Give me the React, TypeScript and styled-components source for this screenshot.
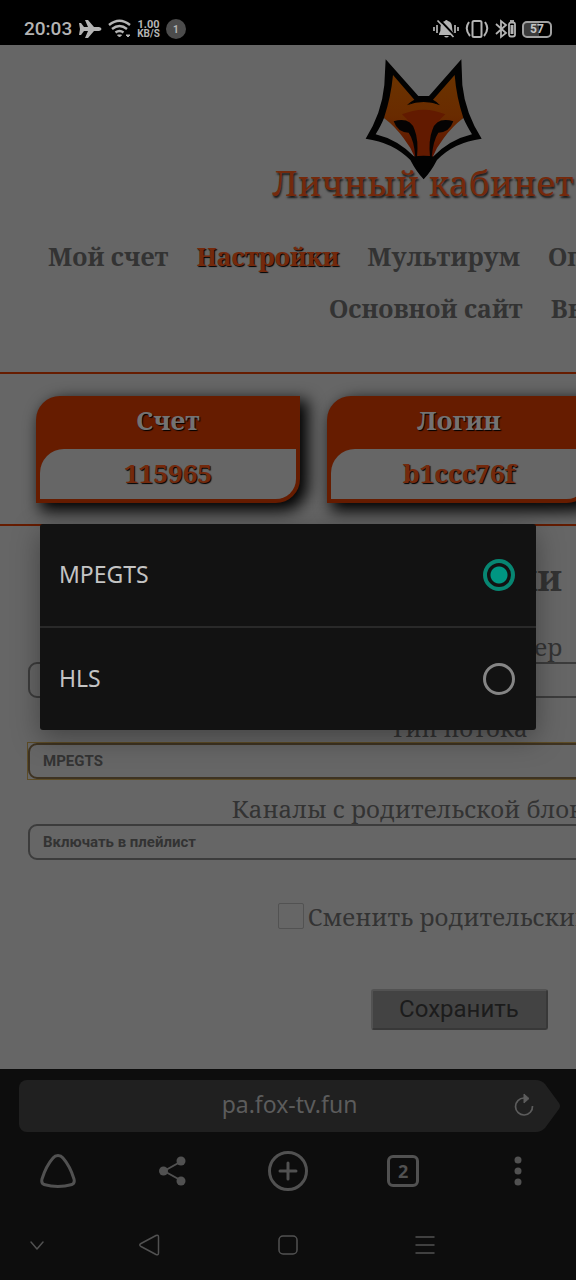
import React, { useState } from "react";
import styled, { createGlobalStyle } from "styled-components";

const serif = `"Noto Serif", "DejaVu Serif Condensed", "DejaVu Serif", serif`;
const orange = "#661c00";

const GlobalStyle = createGlobalStyle`
  * { box-sizing: border-box; }
  body { margin: 0; background: #0d0d0d; font-family: Roboto, sans-serif; }
  button { font: inherit; }
`;

const Screen = styled.div`
  position: relative;
  display: flex;
  flex-direction: column;
  min-height: 100vh;
  overflow: hidden;
`;

const StatusBar = styled.header`
  display: flex;
  align-items: center;
  justify-content: space-between;
  height: 45px;
  padding: 13px 24px 0;
  background: #000;
  color: #b4b4b4;
`;

const StatusGroup = styled.div<{ $gap: number }>`
  display: flex;
  align-items: center;
  gap: ${(p) => p.$gap}px;
`;

const Clock = styled.span`
  font-size: 19px;
  font-weight: 500;
  line-height: 24px;
`;

const Speed = styled.span`
  display: flex;
  flex-direction: column;
  align-items: center;
  font-size: 10px;
  font-weight: 700;
  line-height: 9px;
`;

const SpeedValue = styled.span`
  font-size: 11px;
`;

const Count = styled.span`
  display: grid;
  place-items: center;
  width: 20px;
  height: 20px;
  border-radius: 50%;
  background: #4c4c4c;
  font-size: 10px;
  font-weight: 700;
`;

const Battery = styled.span`
  display: grid;
  place-items: center;
  width: 30px;
  height: 17px;
  border: 2px solid #a0a0a0;
  border-radius: 5px;
  background: linear-gradient(90deg, #3c3c3c 57%, #000 57%);
  color: #c4c4c4;
  font-size: 12px;
  font-weight: 700;
  line-height: 13px;
`;

const Viewport = styled.main`
  flex: 1;
  overflow: hidden;
  background: #666;
  font-family: ${serif};
  color: #333;
`;

const Page = styled.div`
  min-width: 918px;
`;

const Brand = styled.div`
  display: flex;
  flex-direction: column;
  align-items: center;
  width: 846px;
  height: 178px;
  padding-top: 14px;
`;

const Title = styled.h1`
  margin: -22px 0 0;
  color: #74290c;
  font-size: 35px;
  font-weight: 400;
  line-height: 48px;
  text-shadow: 1px 2px 2px #1a1a1a;
  white-space: nowrap;
`;

const Menu = styled.nav`
  height: 151px;
  border-bottom: 2px solid ${orange};
  padding-top: 7px;
`;

const MenuRow = styled.div<{ $indent: number }>`
  display: flex;
  gap: 28px;
  padding-left: ${(p) => p.$indent}px;
  line-height: 52px;
`;

const MenuLink = styled.a<{ $active?: boolean }>`
  color: ${(p) => (p.$active ? "#74290c" : "#333")};
  font-size: 25px;
  font-weight: 700;
  text-decoration: none;
  text-shadow: ${(p) => (p.$active ? "1px 1px 1px #000" : "none")};
  white-space: nowrap;
`;

const Cards = styled.section`
  display: flex;
  gap: 27px;
  height: 152px;
  padding: 22px 36px 0;
  border-bottom: 2px solid ${orange};
`;

const Card = styled.div`
  display: flex;
  flex-direction: column;
  width: 264px;
  height: 107px;
  padding: 0 4px 4px;
  border-radius: 24px 0 24px 0;
  background: ${orange};
  box-shadow: 6px 6px 16px 2px #000;
  text-align: center;
  font-size: 26px;
  font-weight: 700;
`;

const CardName = styled.div`
  height: 53px;
  line-height: 48px;
  color: #737373;
  text-shadow: 1px 1px 1px #000;
`;

const CardValue = styled.div`
  flex: 1;
  border-radius: 24px 0 20px 0;
  background: #666;
  color: #74290c;
  line-height: 48px;
  text-shadow: 1px 1px 1px #000;
`;

const Form = styled.form`
  display: flex;
  flex-direction: column;
  align-items: stretch;
  padding: 28px 28px 0;
`;

const Heading = styled.h2`
  margin: 0 0 15px;
  font-size: 36px;
  line-height: 48px;
  text-align: center;
`;

const Label = styled.label`
  height: 45px;
  padding-top: 12px;
  font-size: 24px;
  line-height: 36px;
  text-align: center;
  white-space: nowrap;
`;

const Field = styled.div<{ $focused?: boolean }>`
  display: flex;
  height: 36px;
  outline: ${(p) => (p.$focused ? "1px solid #5d4c26" : "none")};
`;

const Select = styled.select<{ $focused?: boolean }>`
  appearance: none;
  flex: 1;
  padding: 0 13px;
  border: 2px solid ${(p) => (p.$focused ? "#3e3322" : "#3c3c3c")};
  border-radius: 9px;
  outline: none;
  background: #666;
  color: #333;
  font: 700 15px/20px Roboto, sans-serif;
`;

const CheckRow = styled.label`
  display: flex;
  align-items: center;
  justify-content: center;
  gap: 4px;
  height: 36px;
  margin-top: 38px;
  font-size: 24px;
  white-space: nowrap;
`;

const Checkbox = styled.input`
  appearance: none;
  width: 26px;
  height: 26px;
  margin: 0;
  border: 1px solid #525252;
  border-radius: 2px;
`;

const Save = styled.button`
  align-self: center;
  width: 177px;
  height: 41px;
  margin: 55px 0 39px;
  padding: 0 0 2px;
  border: 2px solid;
  border-color: #525252 #383838 #383838 #525252;
  border-radius: 3px;
  background: #434343;
  color: #1c1c1c;
  font-family: Roboto, sans-serif;
  font-size: 24px;
  line-height: 32px;
`;

const Browser = styled.footer`
  padding-top: 11px;
  background: #0d0d0d;
  color: #515151;
`;

const AddressBar = styled.div`
  display: flex;
  height: 52px;
  margin: 0 16px 0 19px;
`;

const Address = styled.div`
  position: relative;
  flex: 1;
  display: flex;
  align-items: center;
  justify-content: center;
  padding: 0 0 4px 24px;
  border-radius: 8px 0 0 8px;
  background: #202020;
  color: #5c5c5c;
  font-family: "Noto Sans", sans-serif;
  font-size: 23px;
`;

const PlainButton = styled.button`
  display: grid;
  place-items: center;
  padding: 0;
  border: 0;
  background: none;
  color: inherit;
`;

const Reload = styled(PlainButton)`
  position: absolute;
  right: 0;
  top: 13px;
  width: 24px;
  height: 24px;
`;

const Toolbar = styled.div`
  display: grid;
  grid-template-columns: repeat(5, 1fr);
  height: 78px;
`;

const SystemNav = styled.div`
  display: grid;
  grid-template-columns: 74fr 150fr 128fr 146fr 78fr;
  height: 70px;
`;

const Tabs = styled.span`
  display: grid;
  place-items: center;
  width: 32px;
  height: 32px;
  border: 3px solid #515151;
  border-radius: 6px;
  font-family: "Noto Sans", sans-serif;
  font-size: 18px;
  font-weight: 700;
  line-height: 24px;
`;

const Dialog = styled.div`
  position: absolute;
  top: 524px;
  left: 40px;
  right: 40px;
  border-radius: 3px;
  background: #121212;
  box-shadow: 0 8px 28px rgba(0, 0, 0, 0.35);
`;

const Option = styled.label`
  display: flex;
  align-items: center;
  justify-content: space-between;
  height: 102px;
  padding: 0 21px 0 19px;
  color: #c4c4c4;
  font-family: "Noto Sans", sans-serif;
  font-size: 23px;
  line-height: 32px;

  & + & {
    height: 104px;
    border-top: 2px solid #292929;
  }
`;

const OptionName = styled.span`
  padding-bottom: 2px;
`;

const Radio = styled.input`
  appearance: none;
  width: 32px;
  height: 32px;
  margin: 0;
  border: 3px solid #858585;
  border-radius: 50%;

  &:checked {
    border: 4px solid #078672;
    background: radial-gradient(circle, #009682 8px, transparent 9px);
  }
`;

const Fox = () => (
  <svg width="117" height="122" viewBox="314 42 351 366" aria-hidden="true">
    <defs>
      <linearGradient id="fur" x1="0" y1="0" x2="0" y2="1">
        <stop offset="0" stopColor="#6b3300" />
        <stop offset="0.500" stopColor="#692b00" />
        <stop offset="1" stopColor="#5c1000" />
      </linearGradient>
    </defs>
    <path d="M376 43 L474 153 L506 153 L603 43 L606 120 Q615 205 664 281 Q580 292 530 345 Q512 380 490 403 Q468 380 450 345 Q398 292 316 281 Q364 205 372 120Z" fill="#020202" />
    <path d="M398 90 L462 164 Q447 172 440 180 Q488 158 538 180 Q530 170 518 164 L583 90 Q588 155 609 219 L560 280 L518 336 H464 L420 280 L371 219 Q392 155 398 90Z" fill="url(#fur)" />
    <path d="M425 208 Q490 180 555 208 Q520 235 515 290 L512 336 H467 L462 290 Q460 235 425 208Z" fill="#621a00" />
    <path d="M371 219 Q405 245 430 280 Q452 308 463 336 Q412 284 346 268 Q363 240 371 219Z M609 219 Q575 245 550 280 Q528 308 517 336 Q568 284 635 268 Q618 240 609 219Z" fill="#676767" />
    <path d="M400 229 Q450 215 463 255 Q475 285 470 336 H465 Q461 285 445 263 Q412 263 400 229Z M579 229 Q529 215 516 255 Q504 285 509 336 H514 Q519 285 534 263 Q567 263 579 229Z" fill="#050303" />
    <path d="M440 181 Q490 151 540 181 Q490 161 440 181Z M456 336 Q490 328 526 336 L490 401Z" fill="#020202" />
  </svg>
);

const Line = ({ size, width = 2, children }: { size: number; width?: number; children: React.ReactNode }) => (
  <svg
    width={size}
    height={size}
    viewBox={`0 0 ${size} ${size}`}
    fill="none"
    stroke="currentColor"
    strokeWidth={width}
    strokeLinecap="round"
    strokeLinejoin="round"
    aria-hidden="true"
  >
    {children}
  </svg>
);

export default function App() {
  const [stream, setStream] = useState("MPEGTS");

  return (
    <Screen>
      <GlobalStyle />
      <StatusBar>
        <StatusGroup $gap={6}>
          <Clock>20:03</Clock>
          <svg width="24" height="20" viewBox="0 0 24 20" fill="currentColor" aria-hidden="true">
            <path d="M1 4 H3 L6 8 H10 L7 1 H10 L16 8 H21 Q23.500 8.500 23.500 10 Q23.500 11.500 21 12 H16 L10 19 H7 L10 12 H6 L3 16 H1 L2 10Z" />
          </svg>
          <svg width="23" height="20" viewBox="0 0 23 20" fill="none" stroke="currentColor" strokeWidth="2.400" aria-hidden="true">
            <path d="M1 6 Q11.500 -2.500 22 6 M4 10 Q11.500 4 19 10 M7.500 13.500 Q11.500 10.500 15.500 13.500" />
            <path d="M9.500 16 h4 l-2 2z M18 16 h4 l-2 2z" fill="currentColor" strokeWidth="1" />
          </svg>
          <Speed>
            <SpeedValue>1.00</SpeedValue>
            <span>KB/S</span>
          </Speed>
          <Count>1</Count>
        </StatusGroup>
        <StatusGroup $gap={6}>
          <svg width="26" height="20" viewBox="0 0 26 20" aria-hidden="true">
            <path d="M6 15 Q8 12 7.500 8 Q8 3 12 2 Q13 0 15 2 Q19 3 19 8 Q19 12 21 15 V16 H6Z M11 17 h5 q-2.500 3 -5 0Z" fill="currentColor" />
            <path d="M6 0 L22 17" stroke="#000" strokeWidth="2" />
            <path d="M4.500 1.500 L20.500 18 M1 8 v4 M4 6 v8 M22 6 v8 M25 8 v4" stroke="currentColor" strokeWidth="1.700" />
          </svg>
          <svg width="24" height="20" viewBox="0 0 24 20" fill="none" stroke="currentColor" strokeWidth="2" aria-hidden="true">
            <rect x="7.500" y="2" width="9" height="16" rx="1.500" />
            <path d="M4 3 Q-1 10 5 17 M20 3 Q25 10 19 17" />
          </svg>
          <svg width="21" height="20" viewBox="0 0 21 20" fill="none" stroke="currentColor" strokeWidth="1.800" aria-hidden="true">
            <path d="M1 5 L11 14 L6 18 V2 L11 6 L1 15" />
            <rect x="14" y="3.500" width="6" height="14" rx="2" />
            <path d="M15 2 h4" />
            <path d="M17 6 v9" strokeWidth="3" />
          </svg>
          <Battery>57</Battery>
        </StatusGroup>
      </StatusBar>

      <Viewport>
        <Page>
          <Brand>
            <Fox />
            <Title>Личный кабинет</Title>
          </Brand>
          <Menu>
            <MenuRow $indent={48}>
              <MenuLink href="#account">Мой счет</MenuLink>
              <MenuLink href="#settings" $active>Настройки</MenuLink>
              <MenuLink href="#multiroom">Мультирум</MenuLink>
              <MenuLink href="#payment">Оплата</MenuLink>
            </MenuRow>
            <MenuRow $indent={329}>
              <MenuLink href="#site">Основной сайт</MenuLink>
              <MenuLink href="#exit">Выход</MenuLink>
            </MenuRow>
          </Menu>
          <Cards>
            <Card>
              <CardName>Счет</CardName>
              <CardValue>115965</CardValue>
            </Card>
            <Card>
              <CardName>Логин</CardName>
              <CardValue>b1ccc76f</CardValue>
            </Card>
          </Cards>
          <Form>
            <Heading>Настройки</Heading>
            <Label htmlFor="server">Выберите сервер</Label>
            <Field>
              <Select id="server" />
            </Field>
            <Label htmlFor="stream">Тип потока</Label>
            <Field $focused>
              <Select id="stream" $focused value={stream} onChange={(e) => setStream(e.target.value)}>
                <option>MPEGTS</option>
                <option>HLS</option>
              </Select>
            </Field>
            <Label htmlFor="channels">Каналы с родительской блокировкой</Label>
            <Field>
              <Select id="channels">
                <option>Включать в плейлист</option>
              </Select>
            </Field>
            <CheckRow>
              <Checkbox type="checkbox" />
              Сменить родительский код
            </CheckRow>
            <Save type="button">Сохранить</Save>
          </Form>
        </Page>
      </Viewport>

      <Browser>
        <AddressBar>
          <Address>
            pa.fox-tv.fun
            <Reload aria-label="Обновить">
              <svg width="24" height="24" viewBox="0 0 24 24" fill="none" stroke="currentColor" strokeWidth="1.700" aria-hidden="true">
                <path d="M12 5 A8.500 8.500 0 1 0 20.500 13" />
                <path d="M12 1 L17 5.500 L12 10Z" fill="currentColor" strokeWidth="1" />
              </svg>
            </Reload>
          </Address>
          <svg width="24" height="52" viewBox="0 0 24 52" aria-hidden="true">
            <path d="M0 0 Q5 0 9 4 L23 23 Q25 26 23 29 L9 48 Q5 52 0 52Z" fill="#202020" />
          </svg>
        </AddressBar>
        <Toolbar>
          <PlainButton aria-label="Алиса">
            <Line size={38} width={3}>
              <path d="M19 3.500 Q22 3.500 24 6 Q31 14 35 27 Q36 31 33 32.500 Q19 36.500 5 32.500 Q2 31 3 27 Q7 14 14 6 Q16 3.500 19 3.500Z" />
            </Line>
          </PlainButton>
          <PlainButton aria-label="Поделиться">
            <Line size={30}>
              <path d="M24 5 L6 15 L24 25" />
              <g fill="currentColor" stroke="none">
                <circle cx="23" cy="5" r="4.500" />
                <circle cx="5.500" cy="15" r="4.500" />
                <circle cx="23" cy="25" r="4.500" />
              </g>
            </Line>
          </PlainButton>
          <PlainButton aria-label="Новая вкладка">
            <Line size={42} width={3}>
              <circle cx="21" cy="21" r="18.500" />
              <path d="M21 13 V29 M13 21 H29" />
            </Line>
          </PlainButton>
          <PlainButton aria-label="Вкладки">
            <Tabs>2</Tabs>
          </PlainButton>
          <PlainButton aria-label="Меню">
            <svg width="8" height="30" viewBox="0 0 8 30" fill="currentColor" aria-hidden="true">
              <circle cx="4" cy="4" r="3.500" />
              <circle cx="4" cy="15" r="3.500" />
              <circle cx="4" cy="26" r="3.500" />
            </svg>
          </PlainButton>
        </Toolbar>
        <SystemNav>
          <PlainButton aria-label="Свернуть">
            <Line size={14} width={1.5}>
              <path d="M1 4 L7 11 L13 4" />
            </Line>
          </PlainButton>
          <PlainButton aria-label="Назад">
            <Line size={22} width={1.5}>
              <path d="M18 1.500 Q20.500 0.500 20.500 3 V19 Q20.500 21.500 18 20.500 L3 12.500 Q0.500 11 3 9.500Z" />
            </Line>
          </PlainButton>
          <PlainButton aria-label="Домой">
            <Line size={20} width={1.5}>
              <rect x="1" y="1" width="18" height="18" rx="4" />
            </Line>
          </PlainButton>
          <PlainButton aria-label="Недавние">
            <Line size={20} width={1.5}>
              <path d="M1 2 H19 M1 10 H19 M1 18 H19" />
            </Line>
          </PlainButton>
        </SystemNav>
      </Browser>

      <Dialog role="dialog" aria-label="Тип потока">
        {["MPEGTS", "HLS"].map((name) => (
          <Option key={name}>
            <OptionName>{name}</OptionName>
            <Radio type="radio" name="stream-type" checked={stream === name} onChange={() => setStream(name)} />
          </Option>
        ))}
      </Dialog>
    </Screen>
  );
}
